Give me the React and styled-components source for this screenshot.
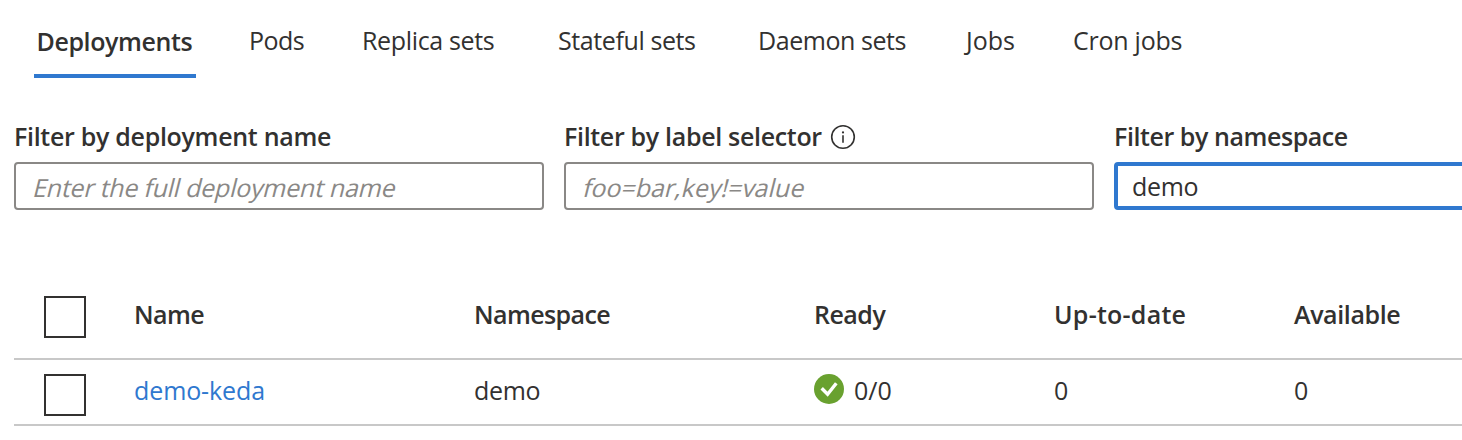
import React from "react";
import styled, { createGlobalStyle } from "styled-components";

const GlobalStyle = createGlobalStyle`
  *, *::before, *::after { box-sizing: border-box; }
  body {
    margin: 0;
    background: #fff;
    color: #323130;
    font-family: "Segoe UI", "Open Sans", "Noto Sans", sans-serif;
    font-size: 25px;
    line-height: 34px;
    overflow: hidden;
  }
`;

const Page = styled.main`
  height: 440px;
  padding-left: 14px;
  overflow: hidden;
`;

const TabBar = styled.nav`
  display: flex;
  height: 78px;
  padding: 23px 0 0 20px;
`;

const Tab = styled.a`
  flex: none;
  width: ${(p) => p.$width}px;
  height: 55px;
  margin-right: ${(p) => p.$gap}px;
  padding: ${(p) => (p.$active ? "1px 0 0 2.5px" : "0 0 0 2px")};
  white-space: nowrap;
  letter-spacing: ${(p) => p.$tracking || 0}px;
  font-weight: ${(p) => (p.$active ? 600 : 400)};
  border-bottom: 4px solid ${(p) => (p.$active ? "#2f78cf" : "transparent")};
`;

const Filters = styled.section`
  display: flex;
  gap: 20px;
  padding-top: 41px;
`;

const Field = styled.div`
  flex: none;
  width: 530px;
`;

const FieldLabel = styled.label`
  display: flex;
  align-items: center;
  gap: 8px;
  height: 34px;
  margin-bottom: 9px;
  font-weight: 600;
  white-space: nowrap;
  letter-spacing: ${(p) => p.$tracking || 0}px;

  svg { margin-top: 2px; }
`;

const InputBox = styled.div`
  display: grid;
  align-items: center;
  height: 48px;
  padding: ${(p) => (p.$focused ? "0 14px" : "2px 16px 0")};
  border: ${(p) => (p.$focused ? "4px solid #2f78cf" : "2px solid #8a8886")};
  border-radius: 4px;
`;

const TextInput = styled.input`
  grid-area: 1 / 1;
  min-width: 0;
  height: 34px;
  padding: 0;
  border: 0;
  outline: none;
  background: transparent;
  color: #323130;
  font: inherit;
  letter-spacing: -0.3px;
`;

const Placeholder = styled.span`
  grid-area: 1 / 1;
  justify-self: start;
  color: #8a8886;
  white-space: nowrap;
  letter-spacing: ${(p) => p.$tracking || 0}px;
  transform: skewX(-14deg);
  transform-origin: 0 75%;
  pointer-events: none;
`;

const Table = styled.section`
  padding-top: 64px;
`;

const Row = styled.div`
  display: grid;
  grid-template-columns: 120px 340px 340px 240px 240px 240px;
  height: ${(p) => p.$height}px;
  padding-top: ${(p) => p.$top}px;
  border-bottom: 2px solid #c8c8c8;
`;

const Cell = styled.div`
  height: 34px;
  white-space: nowrap;
  letter-spacing: ${(p) => p.$tracking || 0}px;
  color: ${(p) => (p.$link ? "#2f78cf" : "inherit")};
`;

const HeaderCell = styled(Cell)`
  padding-top: 1px;
  font-weight: 600;
`;

const SelectCell = styled.div`
  padding: ${(p) => p.$top || 0}px 0 0 30px;
`;

const Checkbox = styled.span`
  display: block;
  width: 42px;
  height: 42px;
  border: 2px solid #323130;
`;

const Status = styled.span`
  display: flex;
  gap: 10px;

  svg { margin-top: 1px; }
`;

const InfoIcon = () => (
  <svg width="26" height="26" viewBox="0 0 26 26" fill="none">
    <circle cx="13" cy="13" r="11.3" stroke="#323130" strokeWidth="1.6" />
    <path d="M13 11.3v7.4" stroke="#323130" strokeWidth="1.6" />
    <circle cx="13" cy="8.4" r="1.1" fill="#323130" />
  </svg>
);

const CheckIcon = () => (
  <svg width="30" height="30" viewBox="0 0 30 30" fill="none">
    <circle cx="15" cy="15" r="15" fill="#69a12f" />
    <path d="M7.7 14.3l5.9 6L22.3 9.2" stroke="#fff" strokeWidth="3.4" />
  </svg>
);

const tabs = [
  { name: "Deployments", width: 162, gap: 51, tracking: -0.4, active: true },
  { name: "Pods", width: 62, gap: 51, tracking: -0.5 },
  { name: "Replica sets", width: 140, gap: 56, tracking: -0.35 },
  { name: "Stateful sets", width: 146, gap: 54, tracking: -0.4 },
  { name: "Daemon sets", width: 156, gap: 52, tracking: -0.45 },
  { name: "Jobs", width: 60, gap: 47, tracking: 0 },
  { name: "Cron jobs", width: 116, gap: 0, tracking: -0.25 },
];

const columns = [
  { name: "Name", tracking: -0.6 },
  { name: "Namespace", tracking: -0.6 },
  { name: "Ready", tracking: -0.5 },
  { name: "Up-to-date", tracking: 0.25 },
  { name: "Available", tracking: -0.38 },
];

export default function App() {
  return (
    <>
      <GlobalStyle />
      <Page>
        <TabBar>
          {tabs.map((t) => (
            <Tab key={t.name} $width={t.width} $gap={t.gap} $active={t.active} $tracking={t.tracking}>
              {t.name}
            </Tab>
          ))}
        </TabBar>
        <Filters>
          <Field>
            <FieldLabel $tracking={-0.3}>Filter by deployment name</FieldLabel>
            <InputBox>
              <TextInput />
              <Placeholder $tracking={-0.23}>Enter the full deployment name</Placeholder>
            </InputBox>
          </Field>
          <Field>
            <FieldLabel $tracking={-0.32}>Filter by label selector<InfoIcon /></FieldLabel>
            <InputBox>
              <TextInput />
              <Placeholder $tracking={0}>foo=bar,key!=value</Placeholder>
            </InputBox>
          </Field>
          <Field>
            <FieldLabel $tracking={-0.43}>Filter by namespace</FieldLabel>
            <InputBox $focused>
              <TextInput defaultValue="demo" />
            </InputBox>
          </Field>
        </Filters>
        <Table>
          <Row $height={86} $top={22}>
            <SelectCell><Checkbox /></SelectCell>
            {columns.map((c) => (
              <HeaderCell key={c.name} $tracking={c.tracking}>{c.name}</HeaderCell>
            ))}
          </Row>
          <Row $height={66} $top={13}>
            <SelectCell $top={1}><Checkbox /></SelectCell>
            <Cell $link $tracking={-0.1}>demo-keda</Cell>
            <Cell $tracking={-0.3}>demo</Cell>
            <Cell><Status><CheckIcon />0/0</Status></Cell>
            <Cell>0</Cell>
            <Cell>0</Cell>
          </Row>
        </Table>
      </Page>
    </>
  );
}
